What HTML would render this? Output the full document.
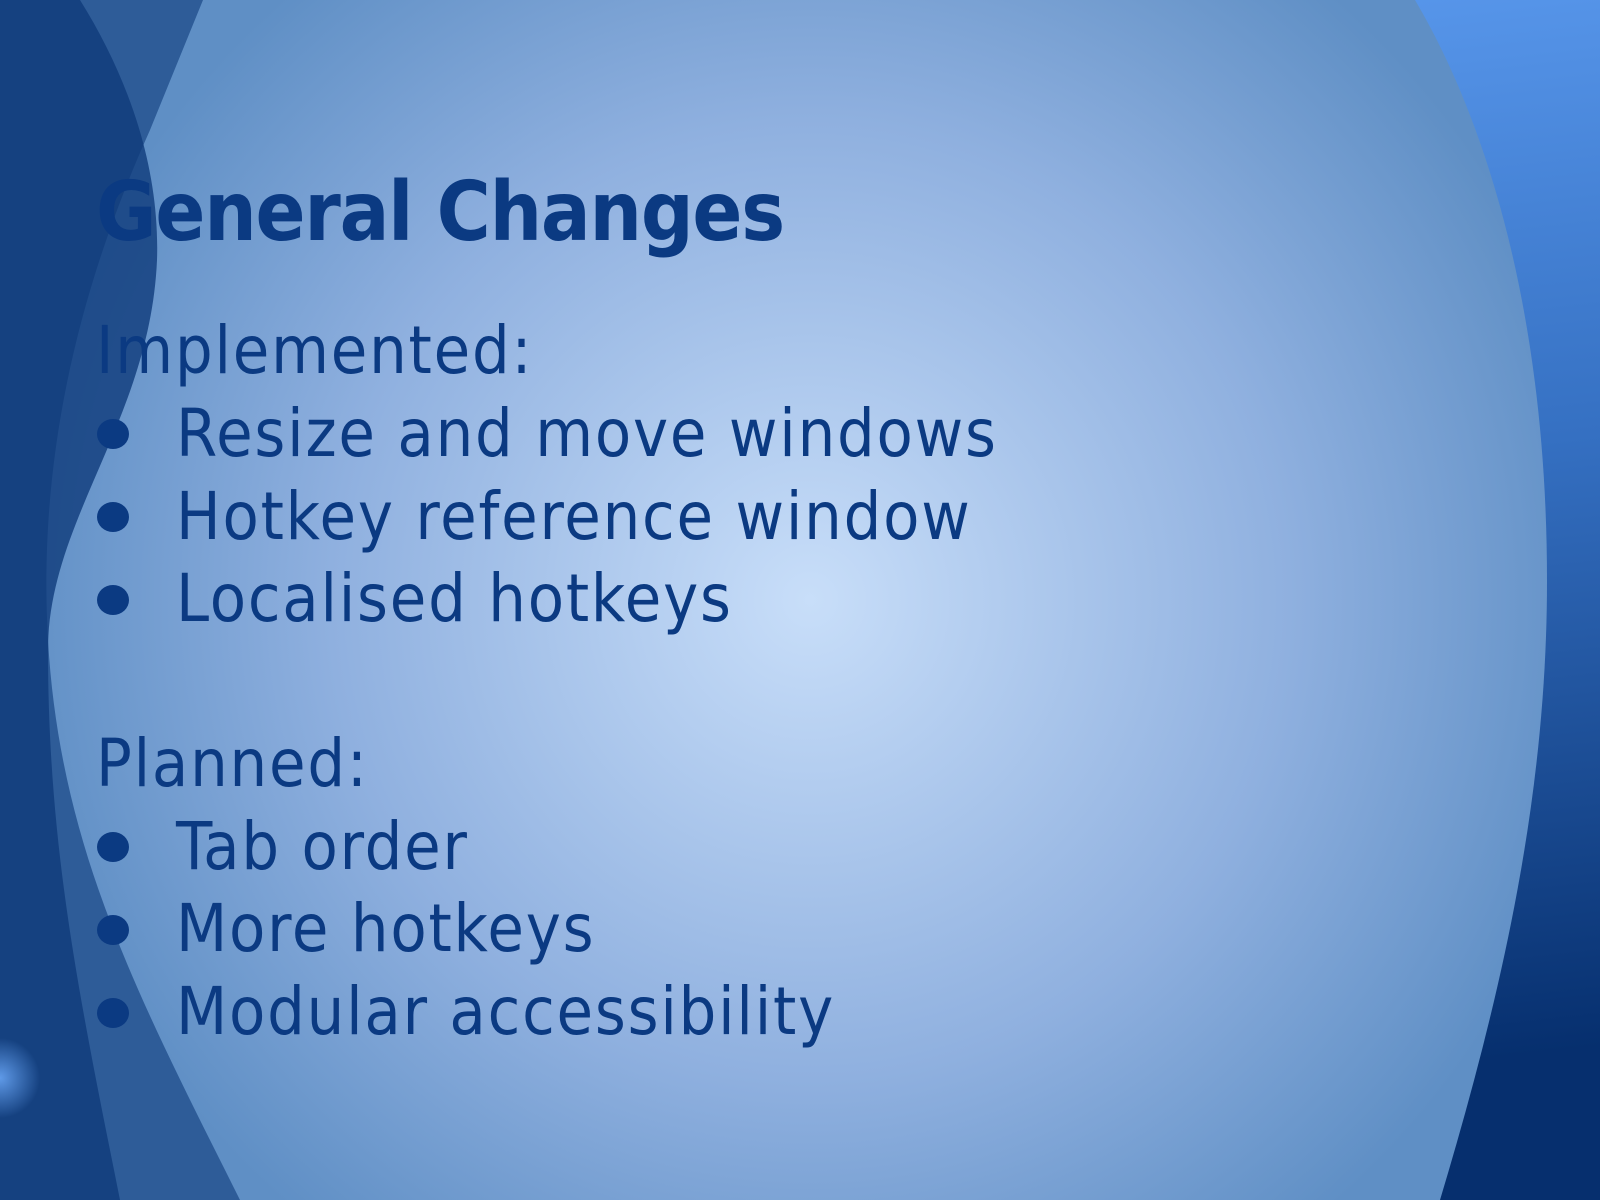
<!DOCTYPE html>
<html><head><meta charset="utf-8"><style>
html,body{margin:0;padding:0}
body{width:1600px;height:1200px;position:relative;overflow:hidden;background:#15427f}
svg{position:absolute;left:0;top:0}
.t{position:absolute;left:96px;color:#0b3a82;font-family:"DejaVu Sans Condensed","DejaVu Sans","Liberation Sans",sans-serif;white-space:nowrap;line-height:1}
.h{font-weight:bold;font-size:82px;top:172px;letter-spacing:-1.2px}
.l{font-size:66px;letter-spacing:1.8px}
.b{position:absolute;left:97px;width:32px;height:30px;border-radius:50%;background:#0b3a82}
</style></head><body>
<svg width="1600" height="1200" viewBox="0 0 1600 1200">
<defs>
<radialGradient id="bg" cx="810" cy="600" r="800" gradientUnits="userSpaceOnUse">
<stop offset="0" stop-color="#c8def9"/><stop offset="0.6" stop-color="#8fb0df"/><stop offset="1" stop-color="#5f8fc5"/>
</radialGradient>
<linearGradient id="rg" x1="0" y1="0" x2="0.15" y2="1">
<stop offset="0" stop-color="#62a2f7"/><stop offset="0.5" stop-color="#3570c2"/><stop offset="1" stop-color="#062f6e"/>
</linearGradient>
<radialGradient id="glow" cx="0" cy="1078" r="40" gradientUnits="userSpaceOnUse">
<stop offset="0" stop-color="#5f9ae8"/><stop offset="1" stop-color="#5f9ae8" stop-opacity="0"/>
</radialGradient>
</defs>
<rect width="1600" height="1200" fill="url(#rg)"/>
<path d="M0 0 H1415 C1480 110 1547 300 1547 581 C1547 800 1500 1000 1440 1200 H0 Z" fill="url(#bg)"/>
<path d="M0 0 H203 L150 130 C60 330 40 500 48 640 C60 850 140 1000 240 1200 H0 Z" fill="#2e5c98"/>
<path d="M0 0 H80 C130 80 160 170 157 260 C150 420 48 520 48 650 C48 850 80 1000 120 1200 H0 Z" fill="#0f3b7a" fill-opacity="0.8"/>
<circle cx="0" cy="1078" r="40" fill="url(#glow)"/>
</svg>
<div class="t h">General Changes</div>
<div class="t l" style="top:318px">Implemented:</div>
<div class="b" style="top:419px"></div><div class="t l" style="left:176px;top:401px">Resize and move windows</div>
<div class="b" style="top:502px"></div><div class="t l" style="left:176px;top:484px">Hotkey reference window</div>
<div class="b" style="top:585px"></div><div class="t l" style="left:176px;top:566px">Localised hotkeys</div>
<div class="t l" style="top:731px">Planned:</div>
<div class="b" style="top:832px"></div><div class="t l" style="left:176px;top:814px">Tab order</div>
<div class="b" style="top:915px"></div><div class="t l" style="left:176px;top:896px">More hotkeys</div>
<div class="b" style="top:998px"></div><div class="t l" style="left:176px;top:979px">Modular accessibility</div>
</body></html>
